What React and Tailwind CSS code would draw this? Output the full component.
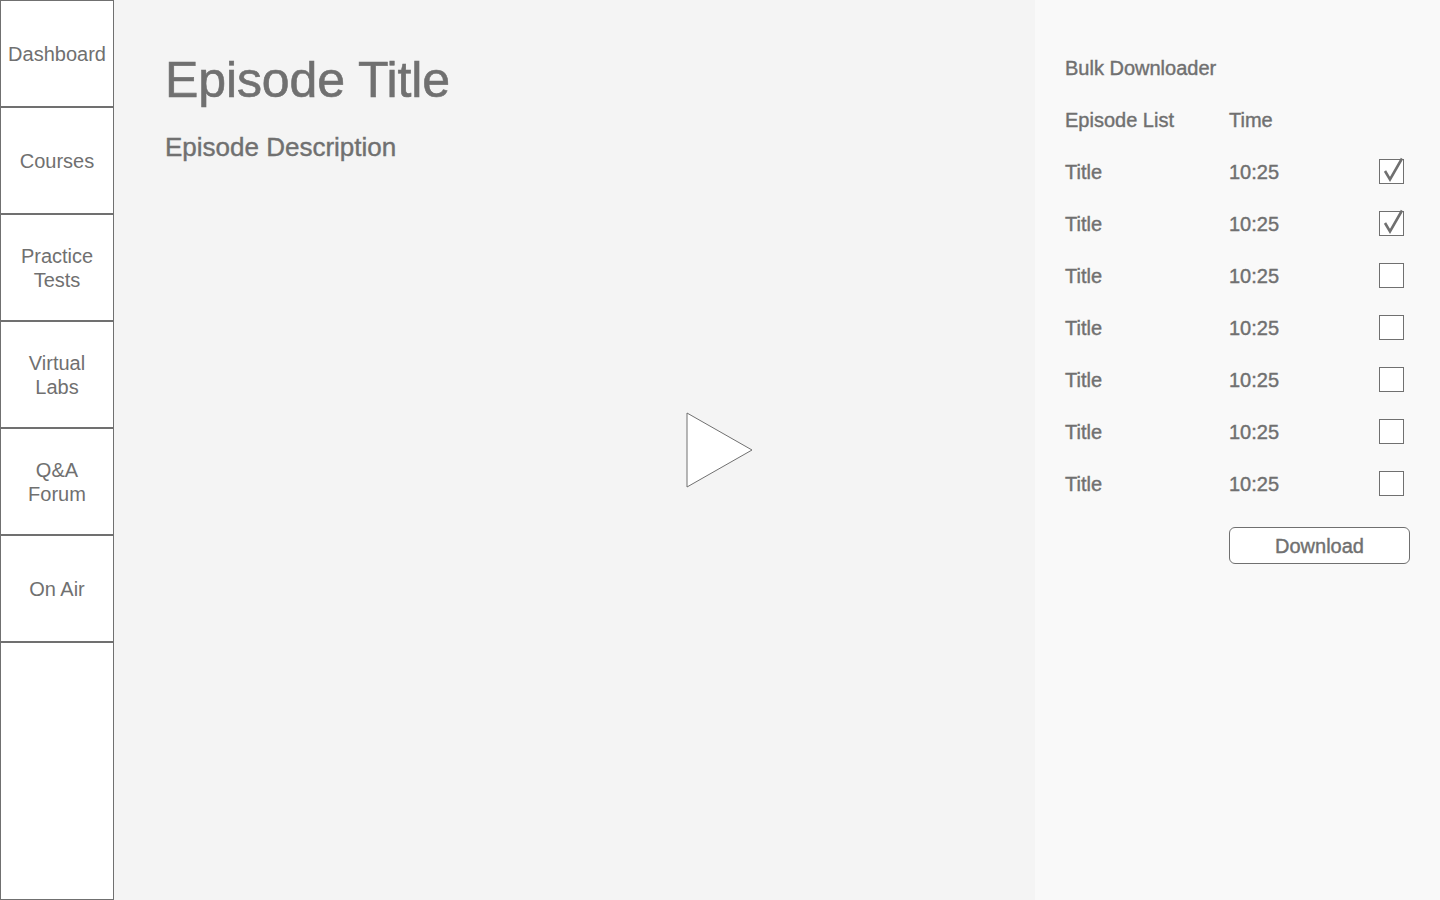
import React, { useState } from "react";

const navItems = ["Dashboard", "Courses", "Practice\nTests", "Virtual\nLabs", "Q&A\nForum", "On Air"];

const CheckBox = ({ checked, onClick }) => (
  <button onClick={onClick} className="relative w-[25px] h-[25px] border-[1.5px] border-[#707070] bg-white">
    {checked && (
      <svg className="absolute left-[-1.5px] top-[-1.5px] overflow-visible" width="25" height="25" viewBox="0 0 25 25">
        <path d="M6 13 L11 21.5 L23 0.5" fill="none" stroke="#707070" strokeWidth="2.6" />
      </svg>
    )}
  </button>
);

export default function App() {
  // checked state for episodes
  const [checked, setChecked] = useState([true, true, false, false, false, false, false]);

  const toggle = (i) => setChecked((prev) => prev.map((c, j) => (j === i ? !c : c)));

  return (
    <div className="flex w-[1440px] h-[900px] bg-[#f4f4f4] text-[#707070] overflow-hidden" style={{ fontFamily: "'Liberation Sans', Arial, sans-serif" }}>
      {/* Sidebar */}
      <div className="flex flex-col w-[114px] h-full">
        {navItems.map((item) => (
          <div key={item} className="h-[107px] flex items-center justify-center border border-[#707070] bg-white text-[20px] leading-[24px] text-center whitespace-pre-line">
            {item}
          </div>
        ))}
        <div className="flex-1 border border-[#707070] bg-white"></div>
      </div>

      {/* Main */}
      <div className="relative flex-1 pl-[51px] pt-[52px]">
        <h1 className="text-[50px] leading-[56px] tracking-[-0.1px] [-webkit-text-stroke:0.6px_#707070]">Episode Title</h1>
        <p className="mt-[23px] text-[26px] leading-[32px] [-webkit-text-stroke:0.4px_#707070]">Episode Description</p>
        <svg className="absolute left-[572px] top-[412px]" width="68" height="78" viewBox="0 0 68 78">
          <path d="M1 1 L1 75 L66 38 Z" fill="white" stroke="#707070" strokeWidth="1" />
        </svg>
      </div>

      {/* Bulk downloader */}
      <div className="w-[405px] h-full bg-[#f9f9f9] pl-[30px] pr-[30px] pt-[55px] text-[20px] [-webkit-text-stroke:0.4px_#707070]">
        <div className="h-[26px] leading-[26px]">Bulk Downloader</div>
        <div className="flex items-center h-[26px] mt-[26px]">
          <span className="w-[164px]">Episode List</span>
          <span>Time</span>
        </div>
        {checked.map((c, i) => (
          <div key={i} className="flex items-center h-[26px] mt-[26px]">
            <span className="w-[164px]">Title</span>
            <span className="flex-1">10:25</span>
            <div className="mr-[6px] mb-[2px] flex [-webkit-text-stroke:0]">
              <CheckBox checked={c} onClick={() => toggle(i)} />
            </div>
          </div>
        ))}
        <div className="flex justify-end mt-[30px]">
          <button className="w-[181px] h-[37px] rounded-[6px] border border-[#707070] bg-white text-[20px] leading-[20px] pt-[1px]">
            Download
          </button>
        </div>
      </div>
    </div>
  );
}
